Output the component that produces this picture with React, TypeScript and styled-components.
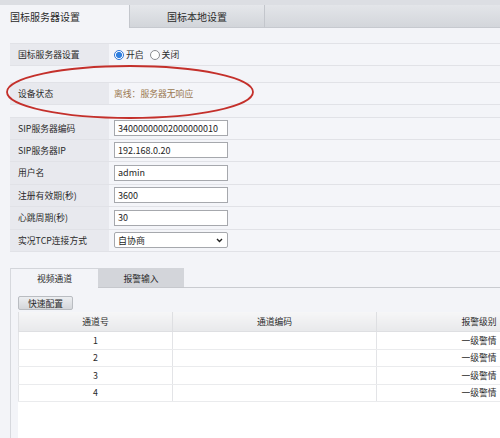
import styled, { createGlobalStyle } from "styled-components";

const GlobalStyle = createGlobalStyle`
  body {
    margin: 0;
    background: #f3f4f8;
    font-family: "Noto Sans CJK SC", "Liberation Sans", sans-serif;
    color: #2a2a2a;
  }
`;

const Page = styled.div`
  position: relative;
  width: 500px;
  height: 438px;
  overflow: hidden;
  background: #f3f4f8;
`;

const TopBar = styled.div`
  display: flex;
  height: 28px;
  padding-top: 5px;
  box-sizing: border-box;
  background: #dcdee3;
`;

const TopTab = styled.div<{ active?: boolean }>`
  width: ${(p) => (p.active ? "130px" : "135px")};
  display: flex;
  align-items: center;
  justify-content: ${(p) => (p.active ? "flex-start" : "center")};
  padding-left: ${(p) => (p.active ? "10px" : "0")};
  box-sizing: border-box;
  font-size: 10px;
  color: #2a2a2a;
  background: ${(p) =>
    p.active ? "#f3f4f8" : "linear-gradient(#e5e7eb, #d2d5da)"};
  border-right: 1px solid #c3c6cc;
  border-bottom: ${(p) => (p.active ? "none" : "1px solid #c6c9cf")};
`;

const TopFiller = styled.div`
  flex: 1;
  background: linear-gradient(#e3e5e9, #d3d6db);
  border-bottom: 1px solid #c6c9cf;
`;

const Section = styled.div<{ gap: number }>`
  margin-top: ${(p) => p.gap}px;
  margin-left: 10px;
`;

const Row = styled.div<{ h: number }>`
  display: flex;
  height: ${(p) => p.h}px;
  box-sizing: border-box;
  border-top: 1px solid #e1e2e7;
  border-bottom: 1px solid #e1e2e7;
  & + & {
    border-top: none;
  }
`;

const Label = styled.div`
  width: 99px;
  flex-shrink: 0;
  display: flex;
  align-items: center;
  padding-left: 8px;
  box-sizing: border-box;
  background: #e8e9ee;
  font-size: 8.8px;
  color: #2a2a2a;
`;

const Value = styled.div<{ tone?: string }>`
  flex: 1;
  display: flex;
  align-items: center;
  padding-left: 5px;
  background: #f4f5f9;
  font-size: 8.8px;
  color: ${(p) => p.tone ?? "#2a2a2a"};
`;

const Radio = styled.span<{ checked?: boolean }>`
  width: 10px;
  height: 10px;
  border-radius: 50%;
  box-sizing: border-box;
  border: 1px solid ${(p) => (p.checked ? "#2d74d4" : "#8a8c90")};
  background: ${(p) =>
    p.checked
      ? "radial-gradient(circle, #2f7fe0 0 2.8px, #fff 3.2px)"
      : "#fff"};
  margin-right: 2px;
`;

const RadioText = styled.span`
  margin-right: 6px;
  font-size: 8.8px;
`;

const Input = styled.div`
  width: 114px;
  height: 16px;
  box-sizing: border-box;
  border: 1px solid #a6a8ad;
  background: #fff;
  display: flex;
  align-items: center;
  padding-left: 3px;
  font-size: 9px;
  color: #1e1e1e;
`;

const SelectBox = styled(Input)`
  justify-content: space-between;
  padding-right: 4px;
  border-radius: 2px;
`;

const Panel = styled.div`
  margin-top: 16px;
  margin-left: 10px;
  border-left: 1px solid #d6d8dd;
  height: 200px;
`;

const PanelTabs = styled.div`
  display: flex;
  height: 20px;
`;

const PanelTab = styled.div<{ active?: boolean }>`
  width: ${(p) => (p.active ? "87px" : "86px")};
  display: flex;
  align-items: center;
  justify-content: center;
  box-sizing: border-box;
  font-size: 8.8px;
  background: ${(p) => (p.active ? "#f3f4f8" : "#d3d5da")};
  border-top: 1px solid #d3d5da;
  border-bottom: ${(p) => (p.active ? "none" : "1px solid #c6c8cd")};
`;

const PanelFiller = styled.div`
  flex: 1;
  border-bottom: 1px solid #c9cbd0;
`;

const QuickButton = styled.div`
  margin: 8px 0 2px 7px;
  width: 55px;
  height: 14px;
  box-sizing: border-box;
  display: flex;
  align-items: center;
  justify-content: center;
  font-size: 8.8px;
  border: 1px solid #b9bcc1;
  border-radius: 2px;
  background: linear-gradient(#eceef1, #d4d6da);
`;

const TableWrap = styled.div`
  margin-left: 7px;
  height: 150px;
  background: #fff;
`;

const Table = styled.table`
  width: 560px;
  table-layout: fixed;
  border-collapse: collapse;
  font-size: 8.8px;
`;

const Th = styled.th<{ w: number }>`
  width: ${(p) => p.w}px;
  height: 19px;
  padding: 0;
  font-weight: normal;
  background: linear-gradient(#f6f6f7, #e8e9eb);
  border: 1px solid #dedfe2;
  border-top: none;
  color: #2a2a2a;
`;

const Td = styled.td`
  height: 17.5px;
  padding: 0;
  box-sizing: border-box;
  text-align: center;
  border-left: 1px solid #e3e4e7;
  border-right: 1px solid #e3e4e7;
  border-bottom: 1px solid #eaebed;
  color: #2a2a2a;
`;

const Ellipse = styled.svg`
  position: absolute;
  left: 0;
  top: 60px;
  pointer-events: none;
`;

const fields = [
  { label: "SIP服务器编码", value: "34000000002000000010" },
  { label: "SIP服务器IP", value: "192.168.0.20" },
  { label: "用户名", value: "admin" },
  { label: "注册有效期(秒)", value: "3600" },
  { label: "心跳周期(秒)", value: "30" },
];

const channels = [1, 2, 3, 4];

export default function App() {
  return (
    <Page>
      <GlobalStyle />
      <TopBar>
        <TopTab active>国标服务器设置</TopTab>
        <TopTab>国标本地设置</TopTab>
        <TopFiller />
      </TopBar>

      <Section gap={15}>
        <Row h={23}>
          <Label>国标服务器设置</Label>
          <Value>
            <Radio checked />
            <RadioText>开启</RadioText>
            <Radio />
            <RadioText>关闭</RadioText>
          </Value>
        </Row>
      </Section>

      <Section gap={16}>
        <Row h={23}>
          <Label>设备状态</Label>
          <Value tone="#9a7850">离线：服务器无响应</Value>
        </Row>
      </Section>

      <Section gap={12}>
        {fields.map((f) => (
          <Row h={22.5} key={f.label}>
            <Label>{f.label}</Label>
            <Value>
              <Input>{f.value}</Input>
            </Value>
          </Row>
        ))}
        <Row h={22.5}>
          <Label>实况TCP连接方式</Label>
          <Value>
            <SelectBox>
              自协商
              <svg width="7" height="5" viewBox="0 0 7 5">
                <path
                  d="M1 1 L3.5 3.5 L6 1"
                  fill="none"
                  stroke="#222"
                  strokeWidth="1.4"
                />
              </svg>
            </SelectBox>
          </Value>
        </Row>
      </Section>

      <Panel>
        <PanelTabs>
          <PanelTab active>视频通道</PanelTab>
          <PanelTab>报警输入</PanelTab>
          <PanelFiller />
        </PanelTabs>
        <QuickButton>快速配置</QuickButton>
        <TableWrap>
          <Table>
            <thead>
              <tr>
                <Th w={153}>通道号</Th>
                <Th w={203}>通道编码</Th>
                <Th w={204}>报警级别</Th>
              </tr>
            </thead>
            <tbody>
              {channels.map((n) => (
                <tr key={n}>
                  <Td>{n}</Td>
                  <Td />
                  <Td>一级警情</Td>
                </tr>
              ))}
            </tbody>
          </Table>
        </TableWrap>
      </Panel>

      <Ellipse width="262" height="64" viewBox="0 0 262 64">
        <ellipse
          cx="130"
          cy="32"
          rx="123"
          ry="26"
          fill="none"
          stroke="#c4302b"
          strokeWidth="1.8"
        />
      </Ellipse>
    </Page>
  );
}
